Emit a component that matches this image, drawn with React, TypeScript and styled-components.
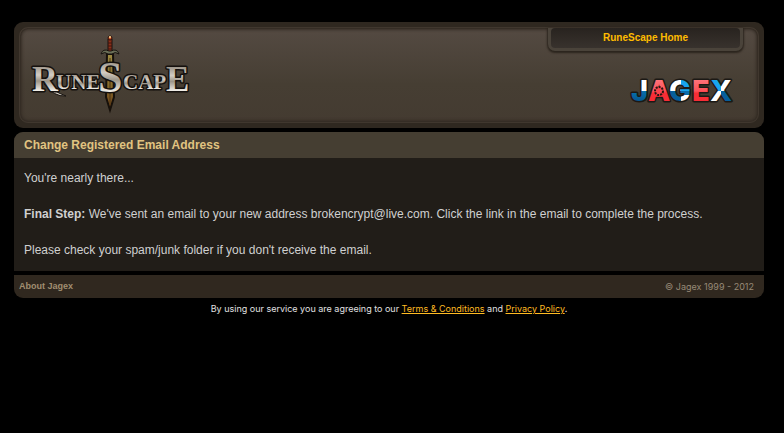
import React from "react";
import styled, { createGlobalStyle } from "styled-components";

const GlobalStyle = createGlobalStyle`
  body {
    margin: 0;
    background: #000;
    color: #d0d0d0;
    font: 12px/18px "Liberation Sans", Arial, sans-serif;
  }
`;

const Page = styled.div`
  max-width: 750px;
  margin: 0 auto;
  padding: 22px 20px 0 14px;
`;

const Header = styled.header`
  padding: 5px;
  border-radius: 9px;
  background: #2f2820;
`;

const HeaderPanel = styled.div`
  display: flex;
  justify-content: space-between;
  height: 94px;
  border: 1px solid #40372e;
  border-radius: 9px;
  background: linear-gradient(#544a42, #463e33 60%, #443b31);
  box-shadow: inset 0 0 0 1px #352d25, inset 0 0 3px 2px #362e26;
`;

const HomeLogo = styled.a`
  display: block;
  margin: 6px 0 0 6px;
  height: 86px;
`;

const HeaderSide = styled.div`
  display: flex;
  flex-direction: column;
  align-items: flex-end;
  width: 195px;
  margin-right: 15px;
`;

const Tab = styled.nav`
  box-sizing: border-box;
  width: 100%;
  padding: 0 3px 3px;
  border-radius: 0 0 7px 7px;
  background: #4a433a;
  box-shadow: 0 1px 2px 1px #2b241d;
`;

const TabLink = styled.a`
  display: block;
  border-radius: 4px;
  background: linear-gradient(#28231f, #38322d);
  color: #ffbb00;
  font-size: 10px;
  font-weight: bold;
  line-height: 20px;
  text-align: center;
  text-decoration: none;
`;

const JagexLink = styled.a`
  display: block;
  margin: 23px 6px 0 0;
  height: 34px;
`;

const Section = styled.section`
  margin-top: 4px;
  background: #211d18;
  border-radius: 9px 9px 0 0;
  overflow: hidden;
`;

const Title = styled.h1`
  margin: 0;
  padding: 4px 10px;
  background: #453e32;
  color: #e1c481;
  font-size: 12px;
  line-height: 18px;
`;

const Message = styled.div`
  padding: 11px 10px 12px;
`;

const Paragraph = styled.p`
  margin: 0 0 18px;
  &:last-child {
    margin-bottom: 0;
  }
`;

const Footer = styled.footer`
  display: flex;
  justify-content: space-between;
  margin-top: 4px;
  padding: 0 10px 0 5px;
  border-radius: 0 0 9px 9px;
  background: #30281f;
  color: #978a77;
  font-size: 9px;
  line-height: 23px;
`;

const AboutLink = styled.a`
  color: #a08e70;
  font-weight: bold;
  text-decoration: none;
`;

const Copyright = styled.span`
  font-family: Inter, Arial, sans-serif;
`;

const Legal = styled.p`
  margin: 2px 0 0;
  color: #e0e0e0;
  font-family: Inter, Arial, sans-serif;
  font-size: 9px;
  text-align: center;
`;

const LegalLink = styled.a`
  color: #ffbb22;
`;

const LogoText = styled.text`
  font-family: "Liberation Serif", serif;
  font-weight: bold;
  paint-order: stroke;
  stroke: #15110e;
  stroke-width: 3px;
  stroke-linejoin: round;
  fill: url(#steel);
`;

const JagexText = styled.text`
  font-family: Inter, sans-serif;
  font-size: 29px;
  font-weight: 800;
  paint-order: stroke;
  stroke: #1c1915;
  stroke-width: 3px;
  stroke-linejoin: round;
`;

function RuneScapeLogo() {
  return (
    <svg width="170" height="86" viewBox="0 0 170 86" role="img" aria-label="RuneScape">
      <defs>
        <linearGradient id="steel" x1="0" y1="0" x2="0" y2="1">
          <stop offset="0.1" stopColor="#8b8378" />
          <stop offset="0.4" stopColor="#d3cdc4" />
          <stop offset="0.55" stopColor="#9d9588" />
          <stop offset="0.8" stopColor="#f4f1eb" />
        </linearGradient>
        <linearGradient id="blade" x1="0" y1="0" x2="0" y2="1">
          <stop offset="0" stopColor="#9b8942" />
          <stop offset="0.5" stopColor="#89702d" />
          <stop offset="1" stopColor="#6c3f18" />
        </linearGradient>
      </defs>
      <path d="M20 46Q25 57 40 62Q28 63 18 50Z" fill="#d3cdc4" stroke="#17130f" />
      <LogoText x="6" y="57" fontSize="36">R</LogoText>
      <LogoText x="30" y="55" fontSize="21">UNE</LogoText>
      <LogoText x="97" y="55" fontSize="21">CAP</LogoText>
      <LogoText x="140" y="57" fontSize="35">E</LogoText>
      <path d="M81 20h6l1 43-4 13-4-13z" fill="url(#blade)" stroke="#17110b" strokeWidth="2" />
      <path d="M84 24v46" stroke="#4a3515" />
      <path d="M82 5h4v14h-4z" fill="#8b2e18" stroke="#1a100c" />
      <path d="M82 9h4M82 12h4M82 15h4" stroke="#3b1710" />
      <path d="M75 20q2-6 8-3h2q6-3 8 3-4-3-7 0h-4q-3-3-7 0z" fill="#6b6f58" stroke="#17130f" />
      <circle cx="84" cy="4" r="2" fill="#cf4b24" stroke="#28100a" />
      <circle cx="84" cy="3" r="1" fill="#ffdf93" />
      <LogoText x="72" y="58" fontSize="44">S</LogoText>
    </svg>
  );
}

function JagexLogo() {
  return (
    <svg width="108" height="34" viewBox="0 0 108 34" role="img" aria-label="Jagex">
      <defs>
        <linearGradient id="jay" gradientUnits="userSpaceOnUse" x1="0" y1="6" x2="0" y2="28">
          <stop offset="0.48" stopColor="#fff" />
          <stop offset="0.5" stopColor="#0870ae" />
          <stop offset="1" stopColor="#07558c" />
        </linearGradient>
        <linearGradient id="red" gradientUnits="userSpaceOnUse" x1="0" y1="6" x2="0" y2="28">
          <stop offset="0" stopColor="#ff7279" />
          <stop offset="0.5" stopColor="#fb5058" />
          <stop offset="0.6" stopColor="#f72d36" />
        </linearGradient>
        <pattern id="gee" patternUnits="userSpaceOnUse" x="40" y="5" width="24" height="24">
          <path d="M0 0h12v12H0z" fill="#fff" />
          <path d="M12 0h12v12H12z" fill="#18a4ed" />
          <path d="M0 12h12v12H0z" fill="#075f9b" />
          <path d="M12 12h12v4H12z" fill="#096caa" />
          <path d="M12 16h12v8H12z" fill="#fff" />
        </pattern>
        <pattern id="ex" patternUnits="userSpaceOnUse" x="80" y="5" width="24" height="24">
          <path d="M0 0h12v12H0z" fill="#19a5ed" />
          <path d="M12 0h12v12H12z" fill="#fff" />
          <path d="M0 12h12v12H0z" fill="#fff" />
          <path d="M12 12h12v12H12z" fill="#075f9b" />
        </pattern>
      </defs>
      <JagexText x="2" y="27" fill="url(#jay)">J</JagexText>
      <JagexText x="19" y="27" fill="url(#red)">A</JagexText>
      <JagexText x="40" y="27" fill="url(#gee)">G</JagexText>
      <JagexText x="63" y="27" fill="url(#red)">E</JagexText>
      <JagexText x="81" y="27" fill="url(#ex)">X</JagexText>
      <circle cx="30" cy="17" r="4" fill="#fb424b" stroke="#241713" strokeWidth="2" strokeDasharray="2 1" />
    </svg>
  );
}

export default function App() {
  return (
    <>
      <GlobalStyle />
      <Page>
        <Header>
          <HeaderPanel>
            <HomeLogo href="#home"><RuneScapeLogo /></HomeLogo>
            <HeaderSide>
              <Tab><TabLink href="#home">RuneScape Home</TabLink></Tab>
              <JagexLink href="#jagex"><JagexLogo /></JagexLink>
            </HeaderSide>
          </HeaderPanel>
        </Header>
        <Section>
          <Title>Change Registered Email Address</Title>
          <Message>
            <Paragraph>You're nearly there...</Paragraph>
            <Paragraph>
              <b>Final Step:</b> We've sent an email to your new address brokencrypt@live.com. Click the link in the email to complete the process.
            </Paragraph>
            <Paragraph>Please check your spam/junk folder if you don't receive the email.</Paragraph>
          </Message>
        </Section>
        <Footer>
          <AboutLink href="#about">About Jagex</AboutLink>
          <Copyright>© Jagex 1999 - 2012</Copyright>
        </Footer>
        <Legal>
          By using our service you are agreeing to our <LegalLink href="#terms">Terms &amp; Conditions</LegalLink> and <LegalLink href="#privacy">Privacy Policy</LegalLink>.
        </Legal>
      </Page>
    </>
  );
}
